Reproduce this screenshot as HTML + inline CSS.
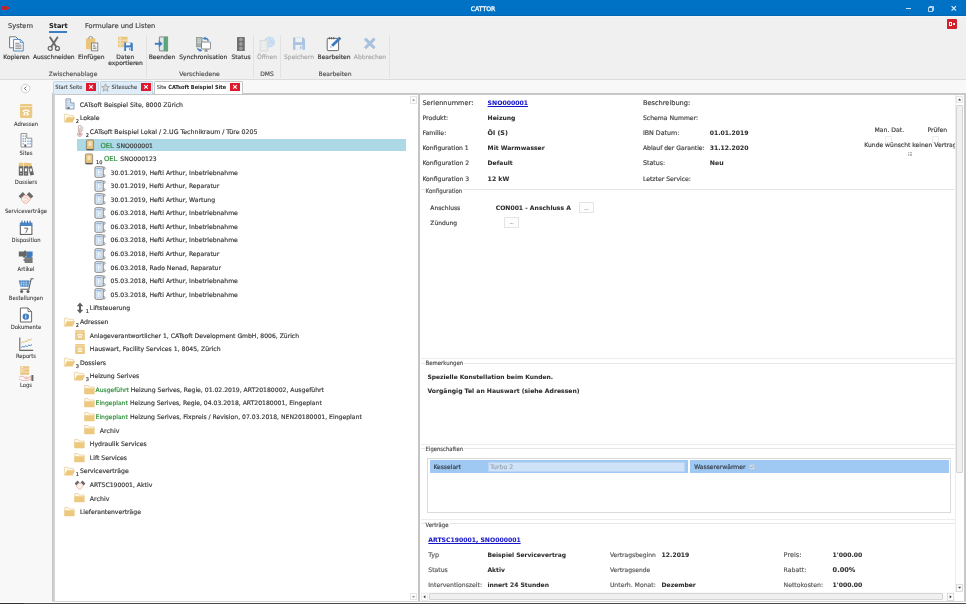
<!DOCTYPE html>
<html lang="de"><head><meta charset="utf-8"><title>CATTOR</title>
<style>
html,body{margin:0;padding:0;background:#fff;}
body{width:970px;height:608px;position:relative;overflow:hidden;font-family:"DejaVu Sans","Liberation Sans",sans-serif;}
#win div,#win span.t,#win svg{position:absolute;}
#win{position:absolute;left:0;top:0;width:970px;height:608px;overflow:hidden;}
#txt{left:0;top:0;width:970px;height:608px;will-change:transform;}
span.t{white-space:nowrap;display:block;-webkit-text-stroke:0.18px;}
.dv{font-family:"DejaVu Sans","Liberation Sans",sans-serif;}
.dvc{font-family:"DejaVu Sans Condensed","Liberation Sans",sans-serif;}
.ls{font-family:"Liberation Sans",sans-serif;}
</style></head><body><div id="win">

<div style="left:0px;top:0px;width:966.2px;height:15.8px;background:#0072c6;"></div>
<div style="left:0px;top:15px;width:966.2px;height:0.8px;background:#0067b4;"></div>
<div style="left:2px;top:6.2px;width:5px;height:3.6px;background:#b8242f;"></div>
<div style="left:7.8px;top:7.2px;width:1.8px;height:1.6px;background:#b8242f;"></div>
<svg style="left:904px;top:3px;" width="56" height="10" viewBox="0 0 56 10"><path d="M2 5.5h5" stroke="#cfe3f4" stroke-width="1" fill="none"/><path d="M24.5 4.5h4v4h-4z M25.5 4.5v-1h4v4h-1" stroke="#cfe3f4" stroke-width="0.9" fill="none"/><path d="M47.6 3.2l4.4 4.4 M52 3.2l-4.4 4.4" stroke="#e8f2fb" stroke-width="1.1" fill="none"/></svg>
<div style="left:0px;top:15.8px;width:966.2px;height:63.2px;background:#f0f0f0;"></div>
<div style="left:0px;top:15.8px;width:966.2px;height:1.2px;background:#f5f6f8;"></div>
<div style="left:0px;top:79px;width:966px;height:1px;background:#dcdcdc;"></div>
<div style="left:0px;top:80px;width:966px;height:523px;background:#f8f8f8;"></div>
<div style="left:947.1px;top:19px;width:9.9px;height:10px;background:#d3202b;border-radius:0.8px;"></div>
<div style="left:949px;top:22px;width:3.4px;height:3.6px;border:1px solid #fff;box-sizing:border-box;"></div>
<div style="left:953.4px;top:23px;width:1.8px;height:1.8px;background:#fff;"></div>
<div style="left:49px;top:31.3px;width:18px;height:1.7px;background:#3b7fc0;"></div>
<div style="left:145.8px;top:35px;width:0.9px;height:42.5px;background:#e2e2e2;"></div>
<div style="left:253px;top:35px;width:0.9px;height:42.5px;background:#e2e2e2;"></div>
<div style="left:280.0px;top:35px;width:0.9px;height:42.5px;background:#e2e2e2;"></div>
<div style="left:388.8px;top:35px;width:0.9px;height:42.5px;background:#e2e2e2;"></div>
<svg style="left:9px;top:36px;" width="16" height="16" viewBox="0 0 16 16"><path d="M0.6 0.8h6.2l2.4 2.4v8.6h-8.6z" fill="#fbfbfb" stroke="#6a6a6a" stroke-width="0.9"/><path d="M4.6 3.4h6.6l3 3v8.6H4.6z" fill="#fff" stroke="#3d7cc0" stroke-width="0.9"/><path d="M6.3 7.3h4.2M6.3 9.1h6.2M6.3 10.9h6.2M6.3 12.7h6.2" stroke="#6a6a6a" stroke-width="0.8"/><path d="M11.2 3.4v3h3" fill="none" stroke="#3d7cc0" stroke-width="0.8"/></svg>
<svg style="left:46px;top:36px;" width="16" height="16" viewBox="0 0 16 16"><path d="M4.2 1.4l6 9.4M11.4 1.4l-6 9.4" stroke="#6a6a6a" stroke-width="1.9" fill="none" stroke-linecap="round"/><circle cx="4.2" cy="12.4" r="2.0" fill="none" stroke="#6a6a6a" stroke-width="1.2"/><circle cx="11.4" cy="12.4" r="2.0" fill="none" stroke="#6a6a6a" stroke-width="1.2"/></svg>
<svg style="left:84px;top:36px;" width="16" height="16" viewBox="0 0 16 16"><rect x="2" y="2.2" width="9.4" height="11" rx="0.8" fill="#e9c57d"/><path d="M4.6 2.6a2.1 2.1 0 0 1 4.2 0" fill="none" stroke="#8a8a8a" stroke-width="0.9"/><rect x="7.4" y="7" width="6.4" height="7.8" fill="#fafafa" stroke="#7b7b7b" stroke-width="0.9"/><path d="M8.8 9.2h2.4M8.8 10.9h3.6M8.8 12.6h3.6" stroke="#7b7b7b" stroke-width="0.8"/></svg>
<svg style="left:117px;top:36px;" width="16" height="16" viewBox="0 0 16 16"><rect x="1" y="0.8" width="9.6" height="3" rx="0.6" fill="#e9c57d"/><rect x="1" y="4.5" width="9.6" height="3" rx="0.6" fill="#e9c57d"/><rect x="1" y="8.2" width="6" height="3" rx="0.6" fill="#e9c57d"/><path d="M2.2 2.3h2M2.2 6h2M2.2 9.7h2" stroke="#fff" stroke-width="0.8"/><path d="M7.2 6.4h7.4l1.2 1.2v7.4H7.2z" fill="#3d7cc0"/><rect x="9" y="6.4" width="4.4" height="3" fill="#f2f6fb"/><rect x="9" y="11.4" width="5" height="3.6" fill="#f2f6fb"/><rect x="12.2" y="12.2" width="1.1" height="2" fill="#3d7cc0"/></svg>
<svg style="left:154px;top:36px;" width="16" height="16" viewBox="0 0 16 16"><path d="M5.4 0.9h8.2v14H5.4z" fill="#e4e4e4" stroke="#8a8a8a" stroke-width="1"/><path d="M10 1.2l3.6-0.8v15.2L10 14.8z" fill="#5aa87a"/><path d="M10 1.2v13.6" stroke="#4c8f68" stroke-width="0.6"/><path d="M0.8 7.8h5.4" stroke="#3d7cc0" stroke-width="1.9"/><path d="M4.8 4.3l3.8 3.5-3.8 3.5z" fill="#3d7cc0"/></svg>
<svg style="left:195px;top:36px;" width="16" height="16" viewBox="0 0 16 16"><rect x="1.3" y="1.3" width="5.8" height="9.6" fill="#a2b0a9" stroke="#7f8d86" stroke-width="0.6"/><path d="M2.3 3h3.8M2.3 4.8h3.8M2.3 6.6h3.8" stroke="#dfe7e3" stroke-width="0.8"/><rect x="6.5" y="6" width="9.1" height="7" rx="0.5" fill="#fdfdfd" stroke="#757575" stroke-width="0.85"/><path d="M9.4 15h3.4M11.1 13v2" stroke="#6e6e6e" stroke-width="0.9"/><path d="M9 2.4a4 4 0 0 1 4.4 2.4" fill="none" stroke="#3d7cc0" stroke-width="1.5"/><path d="M7.6 2.7l2.6-1.9 0.5 3.1z" fill="#3d7cc0"/><path d="M2.4 12.4a4 4 0 0 0 3.6 1.9" fill="none" stroke="#3d7cc0" stroke-width="1.5"/><path d="M7.2 14.4l-2.6 1.5-0.2-3.1z" fill="#3d7cc0"/></svg>
<svg style="left:236px;top:36px;" width="16" height="16" viewBox="0 0 16 16"><rect x="1" y="0.9" width="7.8" height="14.1" rx="0.6" fill="#707070"/><circle cx="4.9" cy="3.5" r="2.25" fill="#9e9e9e" stroke="#5c5c5c" stroke-width="0.45"/><circle cx="4.9" cy="7.95" r="2.25" fill="#9e9e9e" stroke="#5c5c5c" stroke-width="0.45"/><circle cx="4.9" cy="12.4" r="2.25" fill="#9e9e9e" stroke="#5c5c5c" stroke-width="0.45"/></svg>
<svg style="left:259px;top:36px;" width="16" height="16" viewBox="0 0 16 16"><circle cx="10.6" cy="6" r="5.4" fill="#c5dbf0"/><path d="M8 2.4c1.6 1 2 2.4 0.8 3.4M12.4 1.6c-0.8 1.6 0.6 2.6 2.4 2.4M9.4 9.2c1.2-1.4 3-1.2 4 0.4" stroke="#e4eef8" stroke-width="1" fill="none"/><rect x="1" y="4.2" width="7.8" height="11" fill="#e4e8e4" stroke="#d4d9d5" stroke-width="0.6"/><path d="M2.4 6.6h5M2.4 8.6h5M2.4 10.6h5M2.4 12.6h5" stroke="#f4f6f4" stroke-width="0.8"/></svg>
<svg style="left:292px;top:36px;" width="16" height="16" viewBox="0 0 16 16"><path d="M1 1.6h10.4l1.6 1.6v10.6H1z" fill="#a9c4e2"/><rect x="3.4" y="1.6" width="6.6" height="4.6" fill="#f0f0f0"/><rect x="3.4" y="9" width="7" height="4.8" fill="#f0f0f0"/><rect x="8" y="10" width="1.5" height="2.8" fill="#a9c4e2"/></svg>
<svg style="left:326px;top:36px;" width="16" height="16" viewBox="0 0 16 16"><rect x="1.2" y="2.4" width="11.4" height="12.2" rx="0.8" fill="#fdfdfd" stroke="#626262" stroke-width="0.95"/><path d="M3.4 1v2.4M5.6 1v2.4M7.8 1v2.4" stroke="#555" stroke-width="0.9"/><path d="M4.2 11.8l1-3 6.8-6.8 2 2-6.8 6.8z" fill="#3d7cc0"/><path d="M4.2 11.8l1-3 2 2z" fill="#dfe9f4"/><path d="M12 2l1.2-1.2 2 2L14 4z" fill="#2f66a6"/></svg>
<svg style="left:362px;top:36px;" width="16" height="16" viewBox="0 0 16 16"><path d="M3 2.6l9.6 9.6M12.6 2.6L3 12.2" stroke="#a9c1dc" stroke-width="3" fill="none"/></svg>
<svg style="left:20px;top:83px;" width="11" height="11" viewBox="0 0 11 11"><circle cx="5.5" cy="5.5" r="4.3" fill="#fdfdfd" stroke="#bdbdbd" stroke-width="0.7"/><path d="M6.3 3.6L4.4 5.5l1.9 1.9" stroke="#555" stroke-width="0.9" fill="none"/></svg>
<svg style="left:18px;top:103.0px;" width="16" height="16" viewBox="0 0 16 16"><rect x="2" y="1" width="12.2" height="14" rx="1.2" fill="#ecc982"/><path d="M2.2 3.5h11.8" stroke="#f8ebcd" stroke-width="0.9"/><path d="M4.4 8.7c-0.2-3 7.6-3 7.4 0l-1.6 0.4-0.5-1.2H6.5l-0.5 1.2z" fill="#fff"/><path d="M5.2 12.2c0-1.4 0.9-2.6 1.6-3.2h2.6c0.7 0.6 1.6 1.8 1.6 3.2z" fill="#fff"/><circle cx="8.1" cy="10.8" r="0.95" fill="#ecc982"/></svg>
<svg style="left:18px;top:132.1px;" width="16" height="16" viewBox="0 0 16 16"><path d="M3 15V1.6h5.8v4.6h5V15z" fill="#fcfcfc" stroke="#727272" stroke-width="0.75"/><path d="M4.6 3.4h1.2v1.4H4.6zM6.8 3.4H8v1.4H6.8zM4.6 6h1.2v1.4H4.6zM6.8 6H8v1.4H6.8zM4.6 8.6h1.2V10H4.6zM6.8 8.6H8V10H6.8zM9.4 8.6h1.2V10H9.4zM11.6 8.6h1.2V10h-1.2zM9.4 11.2h1.2v1.4H9.4zM11.6 11.2h1.2v1.4h-1.2zM4.6 11.2h1.2v1.4H4.6z" fill="#6c9fd6"/><rect x="6.4" y="12.4" width="1.8" height="2.4" fill="#555"/></svg>
<svg style="left:18px;top:161.2px;" width="16" height="16" viewBox="0 0 16 16"><rect x="0.8" y="1.8" width="4.4" height="3.6" fill="#e9c57d"/><rect x="0.8" y="5.2" width="4.4" height="9.4" fill="#666"/><rect x="1.9" y="7.4" width="2.2" height="3" fill="#f4f4f4"/><rect x="2.4" y="12" width="1.2" height="1.2" fill="#ddd"/><rect x="5.8" y="1.8" width="4.4" height="3.6" fill="#e9c57d"/><rect x="5.8" y="5.2" width="4.4" height="9.4" fill="#666"/><rect x="6.9" y="7.4" width="2.2" height="3" fill="#f4f4f4"/><rect x="7.4" y="12" width="1.2" height="1.2" fill="#ddd"/><g transform="rotate(-13 13 8.4)"><rect x="10.9" y="1.9" width="3.8" height="3.6" fill="#e9c57d"/><rect x="10.9" y="5.3" width="3.8" height="9" fill="#666"/><rect x="11.8" y="7.4" width="2" height="3" fill="#f4f4f4"/></g></svg>
<svg style="left:18px;top:190.3px;" width="16" height="16" viewBox="0 0 16 16"><path d="M0.6 6.2l4.2-4.2 2.4 2.4-4.2 4.2z" fill="#6a6a6a"/><path d="M15.4 6.2l-4.2-4.2-2.4 2.4 4.2 4.2z" fill="#6a6a6a"/><path d="M3.6 8l2.8-2.8 3.2 0.4 3 3.2-1.4 2.2-3 2.6-2.2-0.6-2.6-2.8z" fill="#fdf1ee" stroke="#e7a79a" stroke-width="0.8"/><path d="M6 8.6l1.6-1.6 3.4 3.4M5.4 10.6l1.4 1.4M7 9.8l2 2" stroke="#e7a79a" stroke-width="0.7" fill="none"/></svg>
<svg style="left:18px;top:219.4px;" width="16" height="16" viewBox="0 0 16 16"><rect x="2.3" y="6.4" width="11.6" height="9" fill="#fff" stroke="#555" stroke-width="1"/><rect x="1.8" y="3.6" width="12.6" height="3.3" fill="#4a86c8"/><path d="M4 1.7v2.8M6.7 1.7v2.8M9.4 1.7v2.8M12.1 1.7v2.8" stroke="#3a6fb0" stroke-width="1.1"/><path d="M6.3 9.2h3.6l-2.2 4.6" stroke="#555" stroke-width="0.9" fill="none"/></svg>
<svg style="left:18px;top:248.5px;" width="16" height="16" viewBox="0 0 16 16"><path d="M0.8 2.6h5.4c-0.8-1.6 2.6-1.6 1.8 0h0.8v5H6.8c1 1.6-2.4 1.6-1.6 0H0.8z" fill="#666"/><path d="M8.8 2.6h5.8v5c-1.6-0.8-1.6 2.6 0 1.8v0H8.8c0.6-1.8-2.2-1.6-1.6 0V7.6h1.6z" fill="#3d7cc0"/><path d="M6.6 8.2h2.6c-0.8 1.8 2.6 1.8 1.8 0h3.6v5.8H6.6V12c-1.6 0.8-1.6-2.6 0-1.8z" fill="#7a7a7a"/></svg>
<svg style="left:18px;top:277.6px;" width="16" height="16" viewBox="0 0 16 16"><path d="M0.8 2.6h10.8l-1.2 6.2H2.4z" fill="#3d7cc0"/><path d="M3.4 2.8v6M5.8 2.8v6M8.2 2.8v6M1.4 4.8h10M1.8 6.8h9" stroke="#cfe0f2" stroke-width="0.6"/><path d="M15.6 0.8h-2.4l-2.4 10.4H2.4" fill="none" stroke="#5e5e5e" stroke-width="1.1"/><circle cx="3.6" cy="13.6" r="1.5" fill="#5e5e5e"/><circle cx="10" cy="13.6" r="1.5" fill="#5e5e5e"/></svg>
<svg style="left:18px;top:306.7px;" width="16" height="16" viewBox="0 0 16 16"><path d="M2.4 1h7.6l3.6 3.6v10.4H2.4z" fill="#fff" stroke="#5a5a5a" stroke-width="0.9"/><path d="M10 1v3.6h3.6" fill="none" stroke="#5a5a5a" stroke-width="0.8"/><circle cx="7.8" cy="9.6" r="3.2" fill="#3d7cc0"/><rect x="7.3" y="9" width="1" height="2.4" fill="#fff"/><rect x="7.3" y="7.5" width="1" height="1" fill="#fff"/></svg>
<svg style="left:18px;top:335.8px;" width="16" height="16" viewBox="0 0 16 16"><path d="M1.8 1.6v12.8h13.4" fill="none" stroke="#666" stroke-width="1.1"/><path d="M3.2 7l1.6-1.2 1.2 0.8 1.6-1.8 1.4 1 1.8-2.6 1.4 1.2 1.8-2.2" fill="none" stroke="#e2b865" stroke-width="0.9"/><path d="M3.2 11.4l1.6-1 1.2 0.8 1.8-1.6 1.4 1 1.6-1.6 1.4 0.8 1.8-1.4" fill="none" stroke="#3d7cc0" stroke-width="0.9"/></svg>
<svg style="left:18px;top:364.9px;" width="16" height="16" viewBox="0 0 16 16"><rect x="2.2" y="1.2" width="9" height="2.6" rx="0.5" fill="#e9c57d"/><rect x="2.2" y="4.2" width="9" height="2.6" rx="0.5" fill="#e9c57d"/><rect x="2.2" y="7.2" width="9" height="2.6" rx="0.5" fill="#e9c57d"/><path d="M3.2 2.5h2M3.2 5.5h2" stroke="#fff" stroke-width="0.7"/><path d="M1.2 12.2c2-1.6 3.6-1 5 0h3c1 0 1 1.4 0 1.4H6.6M9.6 13l3.4-1.6v3l-4.6 1.2H4.2l-3-1.4" fill="none" stroke="#e7a79a" stroke-width="0.8"/><rect x="13.4" y="10" width="2" height="6" fill="#6a6a6a"/></svg>
<div style="left:52px;top:93px;width:912px;height:2px;background:#c8c8c8;"></div>
<div style="left:51.5px;top:95px;width:0.6px;height:507px;background:#ffffff;"></div>
<div style="left:52.1px;top:93px;width:2.6px;height:509px;background:linear-gradient(90deg,#c5c5c8,#d6d6d6);"></div>
<div style="left:54.6px;top:95px;width:363.6px;height:507px;background:#ffffff;"></div>
<div style="left:418.2px;top:95px;width:1.9px;height:507px;background:#c4c4c4;"></div>
<div style="left:420.1px;top:95px;width:543.9px;height:507px;background:#ffffff;"></div>
<div style="left:964px;top:93px;width:2px;height:509px;background:#c8c8c8;"></div>
<div style="left:52px;top:601.2px;width:914px;height:0.8px;background:#d8d8d8;"></div>
<div style="left:0px;top:602px;width:966px;height:0.8px;background:#ffffff;"></div>
<div style="left:0px;top:602.8px;width:966px;height:1.1px;background:#4a4a4a;"></div>
<div style="left:0px;top:602.8px;width:24px;height:1.1px;background:#2e2e2e;"></div>
<div style="left:0px;top:604px;width:970px;height:4px;background:#ffffff;"></div>
<div style="left:966px;top:0px;width:4px;height:608px;background:#ffffff;"></div>
<div style="left:53px;top:80.8px;width:46.3px;height:13.0px;background:#deedf8;border:1px solid #c3d6e6;border-bottom:none;box-sizing:border-box;border-radius:1.5px 1.5px 0 0;"></div>
<div style="left:86.3px;top:83.2px;width:10px;height:7.8px;background:#e0182d;"></div>
<svg style="left:86.3px;top:83.2px;" width="10" height="7.8" viewBox="0 0 10 7.8"><path d="M3.2 2.1l3.6 3.6M6.8 2.1L3.2 5.7" stroke="#fff" stroke-width="1.1" fill="none"/></svg>
<div style="left:100px;top:80.8px;width:52.6px;height:13.0px;background:#deedf8;border:1px solid #c3d6e6;border-bottom:none;box-sizing:border-box;border-radius:1.5px 1.5px 0 0;"></div>
<svg style="left:101.3px;top:82.6px;" width="9" height="9" viewBox="0 0 9 9"><path d="M4.5 0.7l1.15 2.6 2.8 0.25-2.1 1.9 0.65 2.8L4.5 6.8 2 8.25l0.65-2.8-2.1-1.9 2.8-0.25z" fill="#d4d4d4" stroke="#8f8f8f" stroke-width="0.6"/></svg>
<div style="left:140.8px;top:83.2px;width:10px;height:7.8px;background:#e0182d;"></div>
<svg style="left:140.8px;top:83.2px;" width="10" height="7.8" viewBox="0 0 10 7.8"><path d="M3.2 2.1l3.6 3.6M6.8 2.1L3.2 5.7" stroke="#fff" stroke-width="1.1" fill="none"/></svg>
<div style="left:154.2px;top:80.8px;width:88.8px;height:13.0px;background:#ffffff;border:1px solid #c6c6c6;border-bottom:none;box-sizing:border-box;border-radius:1.5px 1.5px 0 0;"></div>
<div style="left:230px;top:83.2px;width:10px;height:7.8px;background:#e0182d;"></div>
<svg style="left:230px;top:83.2px;" width="10" height="7.8" viewBox="0 0 10 7.8"><path d="M3.2 2.1l3.6 3.6M6.8 2.1L3.2 5.7" stroke="#fff" stroke-width="1.1" fill="none"/></svg>
<div style="left:77.2px;top:139.1px;width:329.3px;height:12.2px;background:#add8e6;"></div>
<svg style="left:63.6px;top:98.3px;" width="12" height="12" viewBox="0 0 12 12"><path d="M2 11V0.9h4.6v4h3.4V11z" fill="#eef4fb" stroke="#73839a" stroke-width="0.8"/><path d="M3 2.6h2.6M3 4.3h2.6M3 6h6M3 7.7h6" stroke="#9dbfe3" stroke-width="0.8"/><rect x="3.4" y="8.9" width="2.2" height="2" fill="#5a6b80"/></svg>
<svg style="left:63.4px;top:111.89px;" width="12" height="12" viewBox="0 0 12 12"><path d="M1.4 10.2V2.2h3.4l1 1.2h4.6v2.4" fill="#fdf8ec" stroke="#e6cc96" stroke-width="0.7"/><path d="M1.4 10.4l2.6-5.2h8.2l-2.6 5.2z" fill="#ecc97f"/></svg>
<svg style="left:73.6px;top:125.47px;" width="12" height="12" viewBox="0 0 12 12"><path d="M4.4 1.4a1.4 1.4 0 0 1 2.8 0v6a2.3 2.3 0 1 1-2.8 0z" fill="#f7eded" stroke="#b99a9a" stroke-width="0.7"/><circle cx="5.8" cy="9.3" r="1.3" fill="#d79c9b"/><path d="M5.8 9V3.6" stroke="#d79c9b" stroke-width="0.9"/><path d="M8 2.2h1.4M8 3.8h1.4M8 5.4h1.4" stroke="#999" stroke-width="0.6"/></svg>
<svg style="left:83.7px;top:139.05px;" width="12" height="12" viewBox="0 0 12 12"><rect x="2.4" y="0.9" width="7.2" height="10.2" rx="1.1" fill="#e9c57d" stroke="#7d7566" stroke-width="0.7"/><rect x="4.5" y="2.6" width="3" height="4.2" fill="#f5e6c2"/><path d="M2.6 10.5h6.8" stroke="#5f5f5f" stroke-width="1.2"/></svg>
<svg style="left:83.4px;top:152.64px;" width="12" height="12" viewBox="0 0 12 12"><rect x="2.4" y="0.9" width="7.2" height="10.2" rx="1.1" fill="#e9c57d" stroke="#7d7566" stroke-width="0.7"/><rect x="4.5" y="2.6" width="3" height="4.2" fill="#f5e6c2"/><path d="M2.6 10.5h6.8" stroke="#5f5f5f" stroke-width="1.2"/></svg>
<svg style="left:94px;top:166.22px;" width="12" height="12" viewBox="0 0 12 12"><path d="M9 1.1h1.1a0.9 0.9 0 0 1 0 2.2H9M9 8.7h1.1a0.9 0.9 0 0 1 0 2.2H9" fill="#fff" stroke="#808080" stroke-width="0.8"/><rect x="1" y="0.75" width="8.2" height="10.5" rx="1.2" fill="#f1f6fc" stroke="#7e7e7e" stroke-width="1"/><rect x="2.3" y="2" width="5.6" height="8" fill="#c6ddf4"/><path d="M2.3 2.5h5.6" stroke="#8ab4e2" stroke-width="0.9"/><path d="M4.5 4v5.2M4.5 6.2h2.6" stroke="#f8fbfe" stroke-width="0.8" fill="none"/></svg>
<svg style="left:94px;top:179.81px;" width="12" height="12" viewBox="0 0 12 12"><path d="M9 1.1h1.1a0.9 0.9 0 0 1 0 2.2H9M9 8.7h1.1a0.9 0.9 0 0 1 0 2.2H9" fill="#fff" stroke="#808080" stroke-width="0.8"/><rect x="1" y="0.75" width="8.2" height="10.5" rx="1.2" fill="#f1f6fc" stroke="#7e7e7e" stroke-width="1"/><rect x="2.3" y="2" width="5.6" height="8" fill="#c6ddf4"/><path d="M2.3 2.5h5.6" stroke="#8ab4e2" stroke-width="0.9"/><path d="M4.5 4v5.2M4.5 6.2h2.6" stroke="#f8fbfe" stroke-width="0.8" fill="none"/></svg>
<svg style="left:94px;top:193.39px;" width="12" height="12" viewBox="0 0 12 12"><path d="M9 1.1h1.1a0.9 0.9 0 0 1 0 2.2H9M9 8.7h1.1a0.9 0.9 0 0 1 0 2.2H9" fill="#fff" stroke="#808080" stroke-width="0.8"/><rect x="1" y="0.75" width="8.2" height="10.5" rx="1.2" fill="#f1f6fc" stroke="#7e7e7e" stroke-width="1"/><rect x="2.3" y="2" width="5.6" height="8" fill="#c6ddf4"/><path d="M2.3 2.5h5.6" stroke="#8ab4e2" stroke-width="0.9"/><path d="M4.5 4v5.2M4.5 6.2h2.6" stroke="#f8fbfe" stroke-width="0.8" fill="none"/></svg>
<svg style="left:94px;top:206.98px;" width="12" height="12" viewBox="0 0 12 12"><path d="M9 1.1h1.1a0.9 0.9 0 0 1 0 2.2H9M9 8.7h1.1a0.9 0.9 0 0 1 0 2.2H9" fill="#fff" stroke="#808080" stroke-width="0.8"/><rect x="1" y="0.75" width="8.2" height="10.5" rx="1.2" fill="#f1f6fc" stroke="#7e7e7e" stroke-width="1"/><rect x="2.3" y="2" width="5.6" height="8" fill="#c6ddf4"/><path d="M2.3 2.5h5.6" stroke="#8ab4e2" stroke-width="0.9"/><path d="M4.5 4v5.2M4.5 6.2h2.6" stroke="#f8fbfe" stroke-width="0.8" fill="none"/></svg>
<svg style="left:94px;top:220.56px;" width="12" height="12" viewBox="0 0 12 12"><path d="M9 1.1h1.1a0.9 0.9 0 0 1 0 2.2H9M9 8.7h1.1a0.9 0.9 0 0 1 0 2.2H9" fill="#fff" stroke="#808080" stroke-width="0.8"/><rect x="1" y="0.75" width="8.2" height="10.5" rx="1.2" fill="#f1f6fc" stroke="#7e7e7e" stroke-width="1"/><rect x="2.3" y="2" width="5.6" height="8" fill="#c6ddf4"/><path d="M2.3 2.5h5.6" stroke="#8ab4e2" stroke-width="0.9"/><path d="M4.5 4v5.2M4.5 6.2h2.6" stroke="#f8fbfe" stroke-width="0.8" fill="none"/></svg>
<svg style="left:94px;top:234.15px;" width="12" height="12" viewBox="0 0 12 12"><path d="M9 1.1h1.1a0.9 0.9 0 0 1 0 2.2H9M9 8.7h1.1a0.9 0.9 0 0 1 0 2.2H9" fill="#fff" stroke="#808080" stroke-width="0.8"/><rect x="1" y="0.75" width="8.2" height="10.5" rx="1.2" fill="#f1f6fc" stroke="#7e7e7e" stroke-width="1"/><rect x="2.3" y="2" width="5.6" height="8" fill="#c6ddf4"/><path d="M2.3 2.5h5.6" stroke="#8ab4e2" stroke-width="0.9"/><path d="M4.5 4v5.2M4.5 6.2h2.6" stroke="#f8fbfe" stroke-width="0.8" fill="none"/></svg>
<svg style="left:94px;top:247.73px;" width="12" height="12" viewBox="0 0 12 12"><path d="M9 1.1h1.1a0.9 0.9 0 0 1 0 2.2H9M9 8.7h1.1a0.9 0.9 0 0 1 0 2.2H9" fill="#fff" stroke="#808080" stroke-width="0.8"/><rect x="1" y="0.75" width="8.2" height="10.5" rx="1.2" fill="#f1f6fc" stroke="#7e7e7e" stroke-width="1"/><rect x="2.3" y="2" width="5.6" height="8" fill="#c6ddf4"/><path d="M2.3 2.5h5.6" stroke="#8ab4e2" stroke-width="0.9"/><path d="M4.5 4v5.2M4.5 6.2h2.6" stroke="#f8fbfe" stroke-width="0.8" fill="none"/></svg>
<svg style="left:94px;top:261.32px;" width="12" height="12" viewBox="0 0 12 12"><path d="M9 1.1h1.1a0.9 0.9 0 0 1 0 2.2H9M9 8.7h1.1a0.9 0.9 0 0 1 0 2.2H9" fill="#fff" stroke="#808080" stroke-width="0.8"/><rect x="1" y="0.75" width="8.2" height="10.5" rx="1.2" fill="#f1f6fc" stroke="#7e7e7e" stroke-width="1"/><rect x="2.3" y="2" width="5.6" height="8" fill="#c6ddf4"/><path d="M2.3 2.5h5.6" stroke="#8ab4e2" stroke-width="0.9"/><path d="M4.5 4v5.2M4.5 6.2h2.6" stroke="#f8fbfe" stroke-width="0.8" fill="none"/></svg>
<svg style="left:94px;top:274.91px;" width="12" height="12" viewBox="0 0 12 12"><path d="M9 1.1h1.1a0.9 0.9 0 0 1 0 2.2H9M9 8.7h1.1a0.9 0.9 0 0 1 0 2.2H9" fill="#fff" stroke="#808080" stroke-width="0.8"/><rect x="1" y="0.75" width="8.2" height="10.5" rx="1.2" fill="#f1f6fc" stroke="#7e7e7e" stroke-width="1"/><rect x="2.3" y="2" width="5.6" height="8" fill="#c6ddf4"/><path d="M2.3 2.5h5.6" stroke="#8ab4e2" stroke-width="0.9"/><path d="M4.5 4v5.2M4.5 6.2h2.6" stroke="#f8fbfe" stroke-width="0.8" fill="none"/></svg>
<svg style="left:94px;top:288.49px;" width="12" height="12" viewBox="0 0 12 12"><path d="M9 1.1h1.1a0.9 0.9 0 0 1 0 2.2H9M9 8.7h1.1a0.9 0.9 0 0 1 0 2.2H9" fill="#fff" stroke="#808080" stroke-width="0.8"/><rect x="1" y="0.75" width="8.2" height="10.5" rx="1.2" fill="#f1f6fc" stroke="#7e7e7e" stroke-width="1"/><rect x="2.3" y="2" width="5.6" height="8" fill="#c6ddf4"/><path d="M2.3 2.5h5.6" stroke="#8ab4e2" stroke-width="0.9"/><path d="M4.5 4v5.2M4.5 6.2h2.6" stroke="#f8fbfe" stroke-width="0.8" fill="none"/></svg>
<svg style="left:73.6px;top:302.07px;" width="12" height="12" viewBox="0 0 12 12"><path d="M6 0.6l3.2 3.6H7v3.6h2.2L6 11.4 2.8 7.8H5V4.2H2.8z" fill="#5e5e5e"/></svg>
<svg style="left:63.4px;top:315.66px;" width="12" height="12" viewBox="0 0 12 12"><path d="M1.4 10.2V2.2h3.4l1 1.2h4.6v2.4" fill="#fdf8ec" stroke="#e6cc96" stroke-width="0.7"/><path d="M1.4 10.4l2.6-5.2h8.2l-2.6 5.2z" fill="#ecc97f"/></svg>
<svg style="left:74px;top:329.25px;" width="12" height="12" viewBox="0 0 12 12"><rect x="1.2" y="0.9" width="9.6" height="10.2" rx="0.9" fill="#ecc982"/><path d="M1.4 2.8h9.2" stroke="#f8ebcd" stroke-width="0.7"/><path d="M3.2 6.4c-0.1-2.3 5.7-2.3 5.6 0l-1.2 0.3-0.4-0.9H4.8l-0.4 0.9z" fill="#fff"/><path d="M3.8 9.1c0-1 0.7-2 1.2-2.4h2c0.5 0.4 1.2 1.4 1.2 2.4z" fill="#fff"/><circle cx="6" cy="8" r="0.7" fill="#ecc982"/></svg>
<svg style="left:74px;top:342.83px;" width="12" height="12" viewBox="0 0 12 12"><rect x="1.2" y="0.9" width="9.6" height="10.2" rx="0.9" fill="#ecc982"/><path d="M1.4 2.8h9.2" stroke="#f8ebcd" stroke-width="0.7"/><path d="M3.2 6.4c-0.1-2.3 5.7-2.3 5.6 0l-1.2 0.3-0.4-0.9H4.8l-0.4 0.9z" fill="#fff"/><path d="M3.8 9.1c0-1 0.7-2 1.2-2.4h2c0.5 0.4 1.2 1.4 1.2 2.4z" fill="#fff"/><circle cx="6" cy="8" r="0.7" fill="#ecc982"/></svg>
<svg style="left:63.4px;top:356.42px;" width="12" height="12" viewBox="0 0 12 12"><path d="M1.4 10.2V2.2h3.4l1 1.2h4.6v2.4" fill="#fdf8ec" stroke="#e6cc96" stroke-width="0.7"/><path d="M1.4 10.4l2.6-5.2h8.2l-2.6 5.2z" fill="#ecc97f"/></svg>
<svg style="left:73.4px;top:370.0px;" width="12" height="12" viewBox="0 0 12 12"><path d="M1.4 10.2V2.2h3.4l1 1.2h4.6v2.4" fill="#fdf8ec" stroke="#e6cc96" stroke-width="0.7"/><path d="M1.4 10.4l2.6-5.2h8.2l-2.6 5.2z" fill="#ecc97f"/></svg>
<svg style="left:83.6px;top:383.58px;" width="12" height="12" viewBox="0 0 12 12"><path d="M0.7 9.8V1.5h3.4l1.2 1.5h4.9v2" fill="#fdf8ec" stroke="#e6cc96" stroke-width="0.7"/><rect x="0.4" y="4.3" width="10.2" height="5.9" rx="0.4" fill="#ecc97f"/></svg>
<svg style="left:83.6px;top:397.17px;" width="12" height="12" viewBox="0 0 12 12"><path d="M0.7 9.8V1.5h3.4l1.2 1.5h4.9v2" fill="#fdf8ec" stroke="#e6cc96" stroke-width="0.7"/><rect x="0.4" y="4.3" width="10.2" height="5.9" rx="0.4" fill="#ecc97f"/></svg>
<svg style="left:83.6px;top:410.76px;" width="12" height="12" viewBox="0 0 12 12"><path d="M0.7 9.8V1.5h3.4l1.2 1.5h4.9v2" fill="#fdf8ec" stroke="#e6cc96" stroke-width="0.7"/><rect x="0.4" y="4.3" width="10.2" height="5.9" rx="0.4" fill="#ecc97f"/></svg>
<svg style="left:83.6px;top:424.34px;" width="12" height="12" viewBox="0 0 12 12"><path d="M0.7 9.8V1.5h3.4l1.2 1.5h4.9v2" fill="#fdf8ec" stroke="#e6cc96" stroke-width="0.7"/><rect x="0.4" y="4.3" width="10.2" height="5.9" rx="0.4" fill="#ecc97f"/></svg>
<svg style="left:73.6px;top:437.93px;" width="12" height="12" viewBox="0 0 12 12"><path d="M0.7 9.8V1.5h3.4l1.2 1.5h4.9v2" fill="#fdf8ec" stroke="#e6cc96" stroke-width="0.7"/><rect x="0.4" y="4.3" width="10.2" height="5.9" rx="0.4" fill="#ecc97f"/></svg>
<svg style="left:73.6px;top:451.51px;" width="12" height="12" viewBox="0 0 12 12"><path d="M0.7 9.8V1.5h3.4l1.2 1.5h4.9v2" fill="#fdf8ec" stroke="#e6cc96" stroke-width="0.7"/><rect x="0.4" y="4.3" width="10.2" height="5.9" rx="0.4" fill="#ecc97f"/></svg>
<svg style="left:63.4px;top:465.09px;" width="12" height="12" viewBox="0 0 12 12"><path d="M1.4 10.2V2.2h3.4l1 1.2h4.6v2.4" fill="#fdf8ec" stroke="#e6cc96" stroke-width="0.7"/><path d="M1.4 10.4l2.6-5.2h8.2l-2.6 5.2z" fill="#ecc97f"/></svg>
<svg style="left:73.6px;top:478.68px;" width="12" height="12" viewBox="0 0 12 12"><path d="M0.6 4.6l3-3 1.8 1.8-3 3z" fill="#6a6a6a"/><path d="M11.4 4.6l-3-3-1.8 1.8 3 3z" fill="#6a6a6a"/><path d="M2.8 6l2-2 2.4 0.3 2.2 2.4-1 1.6-2.2 2-1.6-0.4-2-2.2z" fill="#fdf1ee" stroke="#e7a79a" stroke-width="0.7"/></svg>
<svg style="left:73.6px;top:492.27px;" width="12" height="12" viewBox="0 0 12 12"><path d="M0.7 9.8V1.5h3.4l1.2 1.5h4.9v2" fill="#fdf8ec" stroke="#e6cc96" stroke-width="0.7"/><rect x="0.4" y="4.3" width="10.2" height="5.9" rx="0.4" fill="#ecc97f"/></svg>
<svg style="left:63.6px;top:505.85px;" width="12" height="12" viewBox="0 0 12 12"><path d="M0.7 9.8V1.5h3.4l1.2 1.5h4.9v2" fill="#fdf8ec" stroke="#e6cc96" stroke-width="0.7"/><rect x="0.4" y="4.3" width="10.2" height="5.9" rx="0.4" fill="#ecc97f"/></svg>
<div style="left:409.6px;top:96px;width:7.2px;height:7.8px;background:#fdfdfd;border:0.6px solid #e6e6e6;box-sizing:border-box;"></div>
<svg style="left:409.6px;top:96px;" width="7.2" height="7.8" viewBox="0 0 7.2 7.8"><polygon points="2.0,4.8 5.2,4.8 3.6,2.8" fill="#9a9a9a"/></svg>
<div style="left:409.6px;top:592.5px;width:7.2px;height:7.8px;background:#fdfdfd;border:0.6px solid #e6e6e6;box-sizing:border-box;"></div>
<svg style="left:409.6px;top:592.5px;" width="7.2" height="7.8" viewBox="0 0 7.2 7.8"><polygon points="2.0,3.0 5.2,3.0 3.6,5.0" fill="#9a9a9a"/></svg>
<div style="left:884.6px;top:135.5px;width:7.2px;height:7px;background:#fff;border:0.7px solid #ededed;box-sizing:border-box;"></div>
<div style="left:932.2px;top:135.5px;width:7.2px;height:7px;background:#fff;border:0.7px solid #ededed;box-sizing:border-box;"></div>
<div style="left:907.5px;top:151.5px;width:4px;height:4px;background:#b9b9b9;"></div>
<div style="left:909.3px;top:151.5px;width:0.4px;height:4px;background:#ececec;"></div>
<div style="left:907.5px;top:153.3px;width:4px;height:0.4px;background:#ececec;"></div>
<div style="left:421px;top:188.5px;width:534px;height:0.9px;background:#e4e4e4;"></div>
<div style="left:424.6px;top:186.8px;width:38.800000000000004px;height:8px;background:#fff;"></div>
<div style="left:578.5px;top:202.3px;width:15.8px;height:10.8px;background:#fdfdfd;border:0.7px solid #e4e4e4;box-sizing:border-box;border-radius:0.6px;"></div>
<div style="left:503.6px;top:217.1px;width:15.8px;height:10.8px;background:#fdfdfd;border:0.7px solid #e4e4e4;box-sizing:border-box;border-radius:0.6px;"></div>
<div style="left:421px;top:358.3px;width:534px;height:0.9px;background:#ececec;"></div>
<div style="left:421px;top:362.8px;width:534px;height:0.9px;background:#e6e6e6;"></div>
<div style="left:424.6px;top:359.3px;width:39.7px;height:8px;background:#fff;"></div>
<div style="left:421px;top:443.9px;width:534px;height:0.9px;background:#ececec;"></div>
<div style="left:421px;top:448.4px;width:534px;height:0.9px;background:#e6e6e6;"></div>
<div style="left:424.6px;top:444.9px;width:39.7px;height:8px;background:#fff;"></div>
<div style="left:427.2px;top:458px;width:523.4px;height:54.6px;background:#fff;border:0.8px solid #dadada;box-sizing:border-box;"></div>
<div style="left:429.8px;top:460.3px;width:258.4px;height:13.2px;background:#9fc8f2;"></div>
<div style="left:487.8px;top:461.8px;width:197.4px;height:10.2px;background:#cfe3f8;border:0.6px solid #b9d5f3;box-sizing:border-box;"></div>
<div style="left:690.4px;top:460.3px;width:258.4px;height:13.2px;background:#9fc8f2;"></div>
<div style="left:749.2px;top:464px;width:5.6px;height:5.6px;background:#c9def5;border:0.5px solid #b3c9e4;box-sizing:border-box;"></div>
<svg style="left:749.2px;top:464px;" width="5.6" height="5.6" viewBox="0 0 5.6 5.6"><path d="M1.3 2.9l1.1 1.1 1.9-2.2" stroke="#7a8794" stroke-width="0.6" fill="none"/></svg>
<div style="left:421px;top:519px;width:534px;height:0.9px;background:#ececec;"></div>
<div style="left:421px;top:523.1px;width:534px;height:0.9px;background:#e6e6e6;"></div>
<div style="left:424.6px;top:520.6px;width:25.0px;height:8px;background:#fff;"></div>
<div style="left:955px;top:95px;width:9px;height:497px;background:#fefefe;"></div>
<div style="left:954.6px;top:95px;width:0.6px;height:497px;background:#ededed;"></div>
<div style="left:955.8px;top:96px;width:7.2px;height:7.2px;background:#fdfdfd;border:0.6px solid #e4e4e4;box-sizing:border-box;"></div>
<svg style="left:955.8px;top:96px;" width="7.2" height="7.2" viewBox="0 0 7.2 7.2"><polygon points="2.0,4.5 5.2,4.5 3.6,2.5" fill="#444"/></svg>
<div style="left:956.3px;top:104.5px;width:6.6px;height:368px;background:#f0f0f0;border:0.6px solid #d4d4d4;box-sizing:border-box;border-radius:1px;"></div>
<div style="left:955.8px;top:584.2px;width:7.2px;height:7.4px;background:#fdfdfd;border:0.6px solid #dcdcdc;box-sizing:border-box;"></div>
<svg style="left:955.8px;top:584.2px;" width="7.2" height="7.4" viewBox="0 0 7.2 7.4"><polygon points="2.0,2.8000000000000003 5.2,2.8000000000000003 3.6,4.800000000000001" fill="#444"/></svg>
<div style="left:421px;top:592px;width:534px;height:9.3px;background:#fafafa;"></div>
<div style="left:420.8px;top:593px;width:7px;height:7.6px;background:#fdfdfd;border:0.6px solid #ececec;box-sizing:border-box;"></div>
<svg style="left:420.8px;top:593px;" width="7" height="7.6" viewBox="0 0 7 7.6"><polygon points="4.4,2.1999999999999997 4.4,5.4 2.4,3.8" fill="#333"/></svg>
<div style="left:428.8px;top:593.3px;width:514.2px;height:7px;background:#f0f0f0;border:0.6px solid #d4d4d4;box-sizing:border-box;border-radius:1px;"></div>
<div style="left:947.2px;top:593px;width:7.2px;height:7.6px;background:#fdfdfd;border:0.6px solid #dcdcdc;box-sizing:border-box;"></div>
<svg style="left:947.2px;top:593px;" width="7.2" height="7.6" viewBox="0 0 7.2 7.6"><polygon points="2.7,2.1999999999999997 2.7,5.4 4.7,3.8" fill="#333"/></svg>
<div id="txt">
<span class="t dv" style="top:3.75px;font-size:6.162px;line-height:10px;color:#f2f9ff;-webkit-text-stroke:0.3px;left:470.8px;">CATTOR</span>
<span class="t dv" style="top:20.50px;font-size:6.7px;line-height:10px;color:#444;left:8px;">System</span>
<span class="t dv" style="top:20.50px;font-size:6.6px;line-height:10px;color:#222;font-weight:bold;-webkit-text-stroke:0.06px;left:49px;">Start</span>
<span class="t dv" style="top:20.50px;font-size:6.65px;line-height:10px;color:#444;left:85px;">Formulare und Listen</span>
<span class="t dv" style="top:51.60px;font-size:6.0px;line-height:10px;color:#3a3a3a;left:-23.6px;width:80px;text-align:center;">Kopieren</span>
<span class="t dv" style="top:51.60px;font-size:6.0px;line-height:10px;color:#3a3a3a;left:13.799999999999997px;width:80px;text-align:center;">Ausschneiden</span>
<span class="t dv" style="top:51.60px;font-size:6.0px;line-height:10px;color:#3a3a3a;left:51.3px;width:80px;text-align:center;">Einfügen</span>
<span class="t dv" style="top:51.60px;font-size:6.0px;line-height:10px;color:#3a3a3a;left:85.3px;width:80px;text-align:center;">Daten</span>
<span class="t dv" style="top:57.90px;font-size:6.0px;line-height:10px;color:#3a3a3a;left:85.5px;width:80px;text-align:center;">exportieren</span>
<span class="t dv" style="top:51.60px;font-size:6.0px;line-height:10px;color:#3a3a3a;left:122.0px;width:80px;text-align:center;">Beenden</span>
<span class="t dv" style="top:51.60px;font-size:6.0px;line-height:10px;color:#3a3a3a;left:163.3px;width:80px;text-align:center;">Synchronisation</span>
<span class="t dv" style="top:51.60px;font-size:6.0px;line-height:10px;color:#3a3a3a;left:201.0px;width:80px;text-align:center;">Status</span>
<span class="t dv" style="top:51.60px;font-size:6.0px;line-height:10px;color:#a9a9a9;left:227.0px;width:80px;text-align:center;">Öffnen</span>
<span class="t dv" style="top:51.60px;font-size:6.0px;line-height:10px;color:#a9a9a9;left:259.0px;width:80px;text-align:center;">Speichern</span>
<span class="t dv" style="top:51.60px;font-size:6.0px;line-height:10px;color:#3a3a3a;left:294.0px;width:80px;text-align:center;">Bearbeiten</span>
<span class="t dv" style="top:51.60px;font-size:6.0px;line-height:10px;color:#a9a9a9;left:330.0px;width:80px;text-align:center;">Abbrechen</span>
<span class="t dv" style="top:69.30px;font-size:6.0px;line-height:10px;color:#555;left:28.0px;width:90px;text-align:center;">Zwischenablage</span>
<span class="t dv" style="top:69.30px;font-size:6.0px;line-height:10px;color:#555;left:154.5px;width:90px;text-align:center;">Verschiedene</span>
<span class="t dv" style="top:69.30px;font-size:6.0px;line-height:10px;color:#555;left:222.0px;width:90px;text-align:center;">DMS</span>
<span class="t dv" style="top:69.30px;font-size:6.0px;line-height:10px;color:#555;left:290.0px;width:90px;text-align:center;">Bearbeiten</span>
<span class="t dvc" style="top:118.80px;font-size:5.85px;line-height:10px;color:#383838;-webkit-text-stroke:0.08px;left:-4.0px;width:60px;text-align:center;">Adressen</span>
<span class="t dvc" style="top:147.85px;font-size:5.85px;line-height:10px;color:#383838;-webkit-text-stroke:0.08px;left:-4.0px;width:60px;text-align:center;">Sites</span>
<span class="t dvc" style="top:176.90px;font-size:5.85px;line-height:10px;color:#383838;-webkit-text-stroke:0.08px;left:-4.0px;width:60px;text-align:center;">Dossiers</span>
<span class="t dvc" style="top:205.95px;font-size:5.85px;line-height:10px;color:#383838;-webkit-text-stroke:0.08px;left:-4.0px;width:60px;text-align:center;">Serviceverträge</span>
<span class="t dvc" style="top:235.00px;font-size:5.85px;line-height:10px;color:#383838;-webkit-text-stroke:0.08px;left:-4.0px;width:60px;text-align:center;">Disposition</span>
<span class="t dvc" style="top:264.05px;font-size:5.85px;line-height:10px;color:#383838;-webkit-text-stroke:0.08px;left:-4.0px;width:60px;text-align:center;">Artikel</span>
<span class="t dvc" style="top:293.10px;font-size:5.85px;line-height:10px;color:#383838;-webkit-text-stroke:0.08px;left:-4.0px;width:60px;text-align:center;">Bestellungen</span>
<span class="t dvc" style="top:322.15px;font-size:5.85px;line-height:10px;color:#383838;-webkit-text-stroke:0.08px;left:-4.0px;width:60px;text-align:center;">Dokumente</span>
<span class="t dvc" style="top:351.20px;font-size:5.85px;line-height:10px;color:#383838;-webkit-text-stroke:0.08px;left:-4.0px;width:60px;text-align:center;">Reports</span>
<span class="t dvc" style="top:380.25px;font-size:5.85px;line-height:10px;color:#383838;-webkit-text-stroke:0.08px;left:-4.0px;width:60px;text-align:center;">Logs</span>
<span class="t dvc" style="top:82.40px;font-size:5.708px;line-height:10px;color:#3a3a3a;-webkit-text-stroke:0.08px;left:55.3px;">Start Seite</span>
<span class="t dvc" style="top:82.40px;font-size:5.837px;line-height:10px;color:#3a3a3a;-webkit-text-stroke:0.08px;left:111.6px;">Sitesuche</span>
<span class="t dvc" style="top:82.40px;font-size:5.497px;line-height:10px;color:#3a3a3a;-webkit-text-stroke:0.08px;left:156.8px;">Site</span>
<span class="t dvc" style="top:82.40px;font-size:5.603px;line-height:10px;color:#262626;font-weight:bold;-webkit-text-stroke:0.06px;-webkit-text-stroke:0px;left:168.2px;">CATsoft Beispiel Site</span>
<span class="t dv" style="top:99.60px;font-size:6.175px;line-height:10px;color:#3a3a3a;left:79.8px;">CATsoft Beispiel Site, 8000 Zürich</span>
<span class="t dv" style="top:116.09px;font-size:5.0px;line-height:10px;color:#3a3a3a;left:75.8px;">2</span>
<span class="t dv" style="top:113.19px;font-size:6.12px;line-height:10px;color:#3a3a3a;left:79.9px;">Lokale</span>
<span class="t dv" style="top:129.67px;font-size:5.0px;line-height:10px;color:#3a3a3a;left:85.8px;">2</span>
<span class="t dv" style="top:126.77px;font-size:6.254px;line-height:10px;color:#3a3a3a;left:89.8px;">CATsoft Beispiel Lokal / 2.UG Technikraum / Türe 0205</span>
<span class="t dv" style="top:140.95px;font-size:6.83px;line-height:10px;color:#2f8f3a;left:100.4px;">OEL</span>
<span class="t dv" style="top:140.95px;font-size:6.079px;line-height:10px;color:#3a3a3a;left:116.60000000000001px;">SNO000001</span>
<span class="t dv" style="top:157.34px;font-size:5.0px;line-height:10px;color:#3a3a3a;left:96.0px;">10</span>
<span class="t dv" style="top:154.44px;font-size:6.83px;line-height:10px;color:#2f8f3a;left:103.9px;">OEL</span>
<span class="t dv" style="top:154.44px;font-size:6.079px;line-height:10px;color:#3a3a3a;left:120.30000000000001px;">SNO000123</span>
<span class="t dv" style="top:167.53px;font-size:6.125px;line-height:10px;color:#3a3a3a;left:110.6px;">30.01.2019, Hefti Arthur, Inbetriebnahme</span>
<span class="t dv" style="top:181.11px;font-size:6.109px;line-height:10px;color:#3a3a3a;left:110.6px;">30.01.2019, Hefti Arthur, Reparatur</span>
<span class="t dv" style="top:194.69px;font-size:6.12px;line-height:10px;color:#3a3a3a;left:110.6px;">30.01.2019, Hefti Arthur, Wartung</span>
<span class="t dv" style="top:208.28px;font-size:6.125px;line-height:10px;color:#3a3a3a;left:110.6px;">06.03.2018, Hefti Arthur, Inbetriebnahme</span>
<span class="t dv" style="top:221.87px;font-size:6.125px;line-height:10px;color:#3a3a3a;left:110.6px;">06.03.2018, Hefti Arthur, Inbetriebnahme</span>
<span class="t dv" style="top:235.45px;font-size:6.125px;line-height:10px;color:#3a3a3a;left:110.6px;">06.03.2018, Hefti Arthur, Inbetriebnahme</span>
<span class="t dv" style="top:249.03px;font-size:6.109px;line-height:10px;color:#3a3a3a;left:110.6px;">06.03.2018, Hefti Arthur, Reparatur</span>
<span class="t dv" style="top:262.62px;font-size:6.12px;line-height:10px;color:#3a3a3a;left:110.6px;">06.03.2018, Rado Nenad, Reparatur</span>
<span class="t dv" style="top:276.21px;font-size:6.125px;line-height:10px;color:#3a3a3a;left:110.6px;">05.03.2018, Hefti Arthur, Inbetriebnahme</span>
<span class="t dv" style="top:289.79px;font-size:6.125px;line-height:10px;color:#3a3a3a;left:110.6px;">05.03.2018, Hefti Arthur, Inbetriebnahme</span>
<span class="t dv" style="top:306.27px;font-size:5.0px;line-height:10px;color:#3a3a3a;left:85.8px;">1</span>
<span class="t dv" style="top:303.38px;font-size:6.087px;line-height:10px;color:#3a3a3a;left:89.8px;">Liftsteuerung</span>
<span class="t dv" style="top:319.86px;font-size:5.0px;line-height:10px;color:#3a3a3a;left:75.8px;">2</span>
<span class="t dv" style="top:316.96px;font-size:6.243px;line-height:10px;color:#3a3a3a;left:79.9px;">Adressen</span>
<span class="t dv" style="top:330.55px;font-size:6.092px;line-height:10px;color:#3a3a3a;left:89.8px;">Anlageverantwortlicher 1, CATsoft Development GmbH, 8006, Zürich</span>
<span class="t dv" style="top:344.13px;font-size:6.141px;line-height:10px;color:#3a3a3a;left:89.8px;">Hauswart, Facility Services 1, 8045, Zürich</span>
<span class="t dv" style="top:360.62px;font-size:5.0px;line-height:10px;color:#3a3a3a;left:75.8px;">3</span>
<span class="t dv" style="top:357.72px;font-size:6.118px;line-height:10px;color:#3a3a3a;left:79.9px;">Dossiers</span>
<span class="t dv" style="top:374.20px;font-size:5.0px;line-height:10px;color:#3a3a3a;left:85.8px;">3</span>
<span class="t dv" style="top:371.30px;font-size:6.131px;line-height:10px;color:#3a3a3a;left:89.8px;">Heizung Serives</span>
<span class="t dv" style="top:384.88px;font-size:6.041px;line-height:10px;color:#2f8f3a;left:95.6px;">Ausgeführt</span>
<span class="t dv" style="top:384.88px;font-size:6.119px;line-height:10px;color:#3a3a3a;left:130.7px;">Heizung Serives, Regie, 01.02.2019, ART20180002, Ausgeführt</span>
<span class="t dv" style="top:398.47px;font-size:6.024px;line-height:10px;color:#2f8f3a;left:95.6px;">Eingeplant</span>
<span class="t dv" style="top:398.47px;font-size:6.104px;line-height:10px;color:#3a3a3a;left:130.0px;">Heizung Serives, Regie, 04.03.2018, ART20180001, Eingeplant</span>
<span class="t dv" style="top:412.06px;font-size:6.024px;line-height:10px;color:#2f8f3a;left:95.6px;">Eingeplant</span>
<span class="t dv" style="top:412.06px;font-size:6.132px;line-height:10px;color:#3a3a3a;left:130.0px;">Heizung Serives, Fixpreis / Revision, 07.03.2018, NEN20180001, Eingeplant</span>
<span class="t dv" style="top:425.64px;font-size:6.269px;line-height:10px;color:#3a3a3a;left:99.8px;">Archiv</span>
<span class="t dv" style="top:439.23px;font-size:6.12px;line-height:10px;color:#3a3a3a;left:89.8px;">Hydraulik Services</span>
<span class="t dv" style="top:452.81px;font-size:6.12px;line-height:10px;color:#3a3a3a;left:89.8px;">Lift Services</span>
<span class="t dv" style="top:469.29px;font-size:5.0px;line-height:10px;color:#3a3a3a;left:75.8px;">1</span>
<span class="t dv" style="top:466.39px;font-size:6.12px;line-height:10px;color:#3a3a3a;left:79.9px;">Serviceverträge</span>
<span class="t dv" style="top:479.98px;font-size:6.12px;line-height:10px;color:#3a3a3a;left:89.8px;">ARTSC190001, Aktiv</span>
<span class="t dv" style="top:493.57px;font-size:6.269px;line-height:10px;color:#3a3a3a;left:89.8px;">Archiv</span>
<span class="t dv" style="top:507.15px;font-size:6.12px;line-height:10px;color:#3a3a3a;left:79.9px;">Lieferantenverträge</span>
<span class="t dv" style="top:98.20px;font-size:6.581px;line-height:10px;color:#444444;left:422.4px;">Seriennummer:</span>
<span class="t dv" style="top:113.26px;font-size:6.196px;line-height:10px;color:#444444;left:422.4px;">Produkt:</span>
<span class="t dv" style="top:113.26px;font-size:6.092px;line-height:10px;color:#2e2e2e;font-weight:bold;-webkit-text-stroke:0.06px;left:487.6px;">Heizung</span>
<span class="t dv" style="top:128.32px;font-size:6.198px;line-height:10px;color:#444444;left:422.4px;">Familie:</span>
<span class="t dv" style="top:128.32px;font-size:6.391px;line-height:10px;color:#2e2e2e;font-weight:bold;-webkit-text-stroke:0.06px;left:487.6px;">Öl (S)</span>
<span class="t dv" style="top:143.38px;font-size:6.07px;line-height:10px;color:#444444;left:422.4px;">Konfiguration 1</span>
<span class="t dv" style="top:143.38px;font-size:6.083px;line-height:10px;color:#2e2e2e;font-weight:bold;-webkit-text-stroke:0.06px;left:487.6px;">Mit Warmwasser</span>
<span class="t dv" style="top:158.44px;font-size:6.11px;line-height:10px;color:#444444;left:422.4px;">Konfiguration 2</span>
<span class="t dv" style="top:158.44px;font-size:6.046px;line-height:10px;color:#2e2e2e;font-weight:bold;-webkit-text-stroke:0.06px;left:487.6px;">Default</span>
<span class="t dv" style="top:173.50px;font-size:6.11px;line-height:10px;color:#444444;left:422.4px;">Konfiguration 3</span>
<span class="t dv" style="top:173.50px;font-size:6.186px;line-height:10px;color:#2e2e2e;font-weight:bold;-webkit-text-stroke:0.06px;left:487.6px;">12 kW</span>
<span class="t dv" style="top:98.20px;font-size:6.152px;line-height:10px;color:#1515c8;font-weight:bold;-webkit-text-stroke:0.06px;left:487.6px;text-decoration:underline;text-decoration-thickness:0.6px;text-underline-offset:0.5px;">SNO000001</span>
<span class="t dv" style="top:98.20px;font-size:6.618px;line-height:10px;color:#444444;left:642.9px;">Beschreibung:</span>
<span class="t dv" style="top:113.26px;font-size:6.134px;line-height:10px;color:#444444;left:642.9px;">Schema Nummer:</span>
<span class="t dv" style="top:128.32px;font-size:6.329px;line-height:10px;color:#444444;left:642.9px;">IBN Datum:</span>
<span class="t dv" style="top:128.32px;font-size:6.117px;line-height:10px;color:#2e2e2e;font-weight:bold;-webkit-text-stroke:0.06px;left:709.8px;">01.01.2019</span>
<span class="t dv" style="top:143.38px;font-size:6.092px;line-height:10px;color:#444444;left:642.9px;">Ablauf der Garantie:</span>
<span class="t dv" style="top:143.38px;font-size:6.117px;line-height:10px;color:#2e2e2e;font-weight:bold;-webkit-text-stroke:0.06px;left:709.8px;">31.12.2020</span>
<span class="t dv" style="top:158.44px;font-size:6.357px;line-height:10px;color:#444444;left:642.9px;">Status:</span>
<span class="t dv" style="top:158.44px;font-size:6.194px;line-height:10px;color:#2e2e2e;font-weight:bold;-webkit-text-stroke:0.06px;left:709.8px;">Neu</span>
<span class="t dv" style="top:173.50px;font-size:6.146px;line-height:10px;color:#444444;left:642.9px;">Letzter Service:</span>
<span class="t dv" style="top:124.60px;font-size:6.179px;line-height:10px;color:#444444;left:874.4px;">Man. Dat.</span>
<span class="t dv" style="top:124.60px;font-size:6.094px;line-height:10px;color:#444444;left:927.4px;">Prüfen</span>
<span class="t dv" style="top:139.70px;font-size:6.05px;line-height:10px;color:#444444;left:864.3px;width:90.6px;overflow:hidden;">Kunde wünscht keinen Vertrag</span>
<span class="t dvc" style="top:185.80px;font-size:6.102px;line-height:10px;color:#555;left:425.6px;">Konfiguration</span>
<span class="t dv" style="top:202.50px;font-size:6.028px;line-height:10px;color:#444444;left:430.3px;">Anschluss</span>
<span class="t dv" style="top:202.50px;font-size:6.086px;line-height:10px;color:#2e2e2e;font-weight:bold;-webkit-text-stroke:0.06px;left:495.7px;">CON001 - Anschluss A</span>
<span class="t dv" style="top:217.70px;font-size:5.99px;line-height:10px;color:#444444;left:430.3px;">Zündung</span>
<span class="t dv" style="top:203.50px;font-size:4.6px;line-height:10px;color:#8a8a8a;left:578.5px;width:16px;text-align:center;">...</span>
<span class="t dv" style="top:218.30px;font-size:4.6px;line-height:10px;color:#8a8a8a;left:503.6px;width:16px;text-align:center;">...</span>
<span class="t dvc" style="top:358.30px;font-size:5.971px;line-height:10px;color:#555;left:425.6px;">Bemerkungen</span>
<span class="t dv" style="top:371.90px;font-size:5.983px;line-height:10px;color:#2e2e2e;font-weight:bold;-webkit-text-stroke:0.06px;left:427.4px;">Spezielle Konstellation beim Kunden.</span>
<span class="t dv" style="top:386.20px;font-size:6.086px;line-height:10px;color:#2e2e2e;font-weight:bold;-webkit-text-stroke:0.06px;left:427.4px;">Vorgängig Tel an Hauswart (siehe Adressen)</span>
<span class="t dvc" style="top:443.90px;font-size:5.898px;line-height:10px;color:#555;left:425.6px;">Eigenschaften</span>
<span class="t dv" style="top:461.90px;font-size:6.035px;line-height:10px;color:#36404c;left:433.4px;">Kesselart</span>
<span class="t dv" style="top:461.90px;font-size:6.235px;line-height:10px;color:#9aa5b2;left:490.2px;">Turbo 2</span>
<span class="t dv" style="top:461.90px;font-size:6.081px;line-height:10px;color:#36404c;left:694.2px;">Wassererwärmer</span>
<span class="t dvc" style="top:519.60px;font-size:5.934px;line-height:10px;color:#555;left:425.6px;">Verträge</span>
<span class="t dv" style="top:534.80px;font-size:6.118px;line-height:10px;color:#1515c8;font-weight:bold;-webkit-text-stroke:0.06px;left:428.3px;text-decoration:underline;text-decoration-thickness:0.6px;text-underline-offset:0.5px;">ARTSC190001, SNO000001</span>
<span class="t dv" style="top:549.90px;font-size:6.477px;line-height:10px;color:#5a5a5a;left:428.3px;">Typ</span>
<span class="t dv" style="top:549.90px;font-size:5.993px;line-height:10px;color:#2e2e2e;font-weight:bold;-webkit-text-stroke:0.06px;left:487.4px;">Beispiel Servicevertrag</span>
<span class="t dv" style="top:565.00px;font-size:6.149px;line-height:10px;color:#5a5a5a;left:428.3px;">Status</span>
<span class="t dv" style="top:565.00px;font-size:6.077px;line-height:10px;color:#2e2e2e;font-weight:bold;-webkit-text-stroke:0.06px;left:487.4px;">Aktiv</span>
<span class="t dv" style="top:579.90px;font-size:6.145px;line-height:10px;color:#5a5a5a;left:428.3px;">Interventionszeit:</span>
<span class="t dv" style="top:579.90px;font-size:6.03px;line-height:10px;color:#2e2e2e;font-weight:bold;-webkit-text-stroke:0.06px;left:487.4px;">innert 24 Stunden</span>
<span class="t dv" style="top:549.90px;font-size:6.024px;line-height:10px;color:#5a5a5a;left:609.9px;">Vertragsbeginn</span>
<span class="t dv" style="top:549.90px;font-size:6.104px;line-height:10px;color:#2e2e2e;font-weight:bold;-webkit-text-stroke:0.06px;left:661.6px;">12.2019</span>
<span class="t dv" style="top:565.00px;font-size:6.026px;line-height:10px;color:#5a5a5a;left:609.9px;">Vertragsende</span>
<span class="t dv" style="top:579.90px;font-size:6.144px;line-height:10px;color:#5a5a5a;left:609.9px;">Unterh. Monat:</span>
<span class="t dv" style="top:579.90px;font-size:6.019px;line-height:10px;color:#2e2e2e;font-weight:bold;-webkit-text-stroke:0.06px;left:661.6px;">Dezember</span>
<span class="t dv" style="top:549.90px;font-size:6.565px;line-height:10px;color:#5a5a5a;left:783.6px;">Preis:</span>
<span class="t dv" style="top:549.90px;font-size:6.131px;line-height:10px;color:#2e2e2e;font-weight:bold;-webkit-text-stroke:0.06px;left:832.6px;">1&#x27;000.00</span>
<span class="t dv" style="top:565.00px;font-size:6.239px;line-height:10px;color:#5a5a5a;left:783.6px;">Rabatt:</span>
<span class="t dv" style="top:565.00px;font-size:6.57px;line-height:10px;color:#2e2e2e;font-weight:bold;-webkit-text-stroke:0.06px;left:832.6px;">0.00%</span>
<span class="t dv" style="top:579.90px;font-size:6.158px;line-height:10px;color:#5a5a5a;left:783.6px;">Nettokosten:</span>
<span class="t dv" style="top:579.90px;font-size:6.131px;line-height:10px;color:#2e2e2e;font-weight:bold;-webkit-text-stroke:0.06px;left:832.6px;">1&#x27;000.00</span>
</div>
</div></body></html>
